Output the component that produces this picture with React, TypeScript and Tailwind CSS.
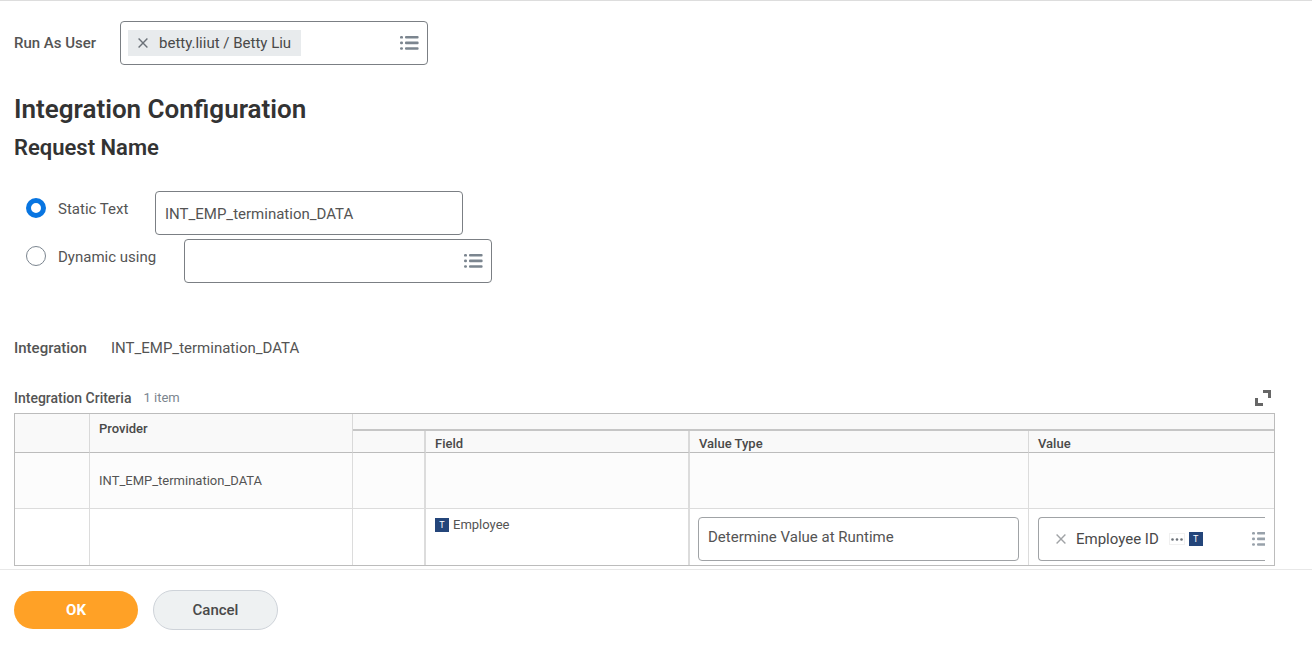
import { useState } from 'react'

function ListIcon({ className = '' }: { className?: string }) {
  return (
    <svg width="19" height="14" viewBox="0 0 19 14" fill="currentColor" className={`shrink-0 ${className}`} aria-hidden="true">
      {[0, 5.6, 11.2].map((y) => (
        <g key={y}>
          <rect x="0" y={y} width="3" height="2.6" rx="1.2" />
          <rect x="5" y={y} width="13.6" height="2.6" rx="1" />
        </g>
      ))}
    </svg>
  )
}

function CloseIcon() {
  return (
    <svg width="10" height="10" viewBox="0 0 10 10" stroke="currentColor" strokeWidth="1.4" fill="none" aria-hidden="true">
      <path d="M.6.6l8.8 8.8M9.4.6L.6 9.4" />
    </svg>
  )
}

function TypeBadge() {
  return (
    <span className="flex h-3.5 w-3.5 shrink-0 items-center justify-center bg-[#24457a] text-[9px] leading-none text-white">
      T
    </span>
  )
}

const RADIO =
  'mr-3 h-5 w-5 shrink-0 appearance-none rounded-full border border-[#7b858f] bg-white checked:border-[5px] checked:border-[#0875e1]'
const FIELD = 'h-11 w-[308px] rounded border border-[#7b7f84] bg-white'
const HEAD = 'border-r border-b border-r-[#d9d9d9] border-b-[#bcbcbc] px-[9px] text-left align-top font-medium text-[#494949]'
const CELL = 'border-r border-[#dcdcdc]'

export default function App() {
  const [mode, setMode] = useState('static')
  const [requestName, setRequestName] = useState('INT_EMP_termination_DATA')
  const [dynamicField, setDynamicField] = useState('')

  return (
    <form
      className="border-t border-[#dddddd] bg-white font-['Roboto',sans-serif] text-[15px] leading-5 text-[#545454]"
      onSubmit={(e) => e.preventDefault()}
    >
      <div className="pt-5 pr-[37px] pb-[3px] pl-3.5">
        {/* Run as user */}
        <div className="flex items-center">
          <label htmlFor="run-as" className="w-[106px] font-medium">Run As User</label>
          <div className={`${FIELD} flex items-center pr-2 pl-[7px]`}>
            <span className="flex h-[26px] shrink-0 items-center gap-[11px] bg-[#e8ebed] px-2.5 text-[#494949]">
              <button type="button" aria-label="Remove betty.liiut / Betty Liu" className="text-[#6b7178]">
                <CloseIcon />
              </button>
              betty.liiut / Betty Liu
            </span>
            <input id="run-as" className="h-full w-0 min-w-0 flex-1 outline-none" />
            <button type="button" aria-label="Show users" className="text-[#7b858f]">
              <ListIcon />
            </button>
          </div>
        </div>

        <h1 className="mt-7 text-[26px] leading-8 font-semibold text-[#333333]">Integration Configuration</h1>
        <h2 className="mt-2 text-[22px] leading-[30px] font-semibold text-[#333333]">Request Name</h2>

        {/* Request name */}
        <div className="mt-7 flex flex-col gap-1 pl-3">
          <div className="flex items-start">
            <label className="mt-[7px] flex w-[129px] items-start">
              <input type="radio" name="request" className={RADIO} checked={mode === 'static'} onChange={() => setMode('static')} />
              <span className="leading-[22px]">Static Text</span>
            </label>
            <input
              aria-label="Static text"
              className={`${FIELD} px-[9px] pt-0.5`}
              value={requestName}
              onChange={(e) => setRequestName(e.target.value)}
            />
          </div>
          <div className="flex items-start">
            <label className="mt-[7px] flex w-[158px] items-start">
              <input type="radio" name="request" className={RADIO} checked={mode === 'dynamic'} onChange={() => setMode('dynamic')} />
              <span className="leading-[22px]">Dynamic using</span>
            </label>
            <div className={`${FIELD} flex items-center pr-2 pl-[9px]`}>
              <input
                aria-label="Dynamic using"
                className="h-full min-w-0 flex-1 outline-none"
                value={dynamicField}
                onChange={(e) => setDynamicField(e.target.value)}
              />
              <button type="button" aria-label="Show fields" className="text-[#7b858f]">
                <ListIcon />
              </button>
            </div>
          </div>
        </div>

        <div className="mt-[55px] flex">
          <span className="w-[97px] font-medium">Integration</span>
          <span>INT_EMP_termination_DATA</span>
        </div>

        {/* Criteria grid */}
        <div className="mt-[30px] flex items-center text-[13px]">
          <span id="criteria" className="text-[14px] font-medium">Integration Criteria</span>
          <span className="ml-3 text-[#7b858f]">1 item</span>
          <button type="button" aria-label="Toggle fullscreen" className="mr-1 ml-auto text-[#666666]">
            <svg width="16" height="16" viewBox="0 0 16 16" fill="none" stroke="currentColor" strokeWidth="3" aria-hidden="true">
              <path d="M8 1.5h6.5V8M1.5 8v6.5H8" />
            </svg>
          </button>
        </div>
        <table aria-labelledby="criteria" className="mt-[5px] w-full table-fixed border-separate border-spacing-0 border border-[#bcbcbc] text-[13px]">
          <colgroup>
            <col className="w-[75px]" />
            <col className="w-[263px]" />
            <col className="w-[73px]" />
            <col className="w-[264px]" />
            <col className="w-[339px]" />
            <col />
          </colgroup>
          <thead className="bg-[#f9f9f9]">
            <tr className="h-[17px]">
              <th rowSpan={2} className={HEAD}></th>
              <th rowSpan={2} className={`${HEAD} pt-[5px]`}>Provider</th>
              <th colSpan={4} className="border-b-2 border-[#c6c6c6] p-0"></th>
            </tr>
            <tr className="h-[22px]">
              <th className={`${HEAD} border-r-2`}></th>
              <th className={`${HEAD} border-r-2 pt-[5px] leading-4`}>Field</th>
              <th className={`${HEAD} pt-[5px] leading-4`}>Value Type</th>
              <th className={`${HEAD} border-r-0 pt-[5px] leading-4`}>Value</th>
            </tr>
          </thead>
          <tbody>
            <tr className="h-14 bg-[#fcfcfc]">
              <td className={`${CELL} border-b`}></td>
              <td className={`${CELL} border-b px-[9px]`}>INT_EMP_termination_DATA</td>
              <td className={`${CELL} border-r-2 border-b`}></td>
              <td className={`${CELL} border-r-2 border-b`}></td>
              <td className={`${CELL} border-b`}></td>
              <td className="border-b border-[#dcdcdc]"></td>
            </tr>
            <tr className="h-14">
              <td className={CELL}></td>
              <td className={CELL}></td>
              <td className={`${CELL} border-r-2`}></td>
              <td className={`${CELL} border-r-2 px-[9px] pt-1.5 align-top`}>
                <span className="flex items-center gap-1">
                  <TypeBadge />
                  Employee
                </span>
              </td>
              <td className={`${CELL} pt-2 pr-[9px] pb-1 pl-2`}>
                <select
                  aria-label="Value type"
                  className="block h-11 w-full appearance-none rounded border border-[#a0a3a6] bg-white px-[9px] pb-1 text-[15px]"
                >
                  <option>Determine Value at Runtime</option>
                </select>
              </td>
              <td className="px-[9px] pt-2 pb-1">
                <div className="flex h-11 items-center rounded-l border border-r-0 border-[#a0a3a6] pl-[17px] text-[15px] text-[#494949]">
                  <button type="button" aria-label="Remove Employee ID" className="mr-2.5 text-[#a0a3a6]">
                    <CloseIcon />
                  </button>
                  <span className="whitespace-nowrap">Employee ID</span>
                  <button type="button" aria-label="Related actions" className="mr-1 ml-2.5 flex h-3 w-4 items-center justify-center border border-[#f0f0f0] text-[#6b7178]">
                    <svg width="12" height="3" viewBox="0 0 12 3" fill="currentColor" className="shrink-0" aria-hidden="true">
                      <circle cx="1.5" cy="1.5" r="1.3" />
                      <circle cx="6" cy="1.5" r="1.3" />
                      <circle cx="10.5" cy="1.5" r="1.3" />
                    </svg>
                  </button>
                  <TypeBadge />
                  <button type="button" aria-label="Show values" className="ml-auto w-[13px] overflow-hidden text-[#98a1aa]">
                    <ListIcon className="max-w-none" />
                  </button>
                </div>
              </td>
            </tr>
          </tbody>
        </table>
      </div>

      <div className="flex items-center gap-[15px] border-t border-[#e8e8e8] px-3.5 py-5">
        <button type="submit" className="h-[38px] w-[124px] rounded-full bg-[#ffa126] font-bold text-white">OK</button>
        <button type="button" className="h-10 w-[125px] rounded-full border border-[#ced3d9] bg-[#eef1f2] font-medium text-[#494949]">
          Cancel
        </button>
      </div>
    </form>
  )
}
